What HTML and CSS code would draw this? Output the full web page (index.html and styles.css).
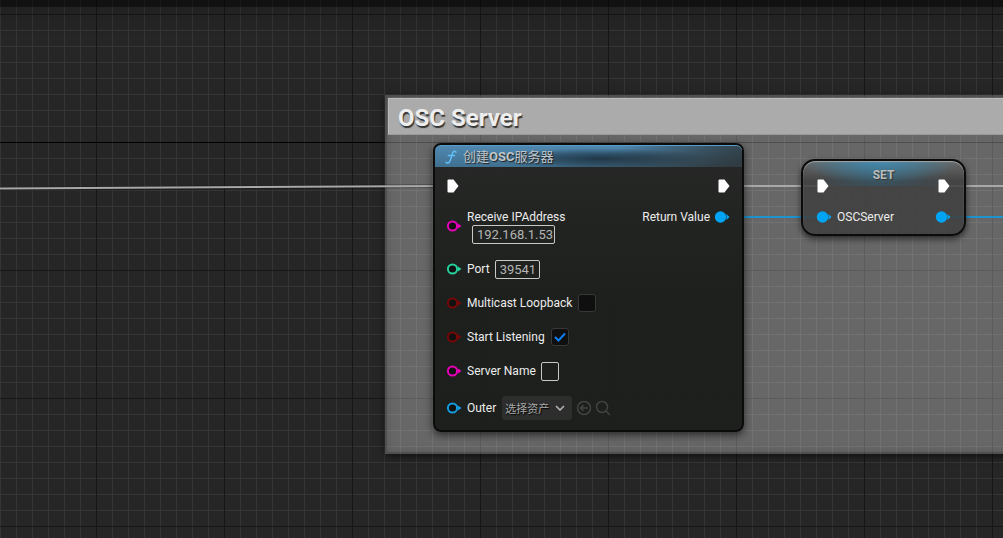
FILE: index.html
```html
<!DOCTYPE html>
<html lang="zh-CN">
<head>
<meta charset="utf-8">
<title>Blueprint Graph</title>
<link rel="stylesheet" href="styles.css">
</head>
<body>
<svg class="defs" width="0" height="0" aria-hidden="true">
  <symbol id="exec" viewBox="0 0 12 14"><path d="M0.5 1.5Q.5.5 1.5.5H6.500L11.500 7L6.500 13.500H1.500Q.5 13.500.5 12.500Z" fill="#fff"/></symbol>
  <symbol id="ring" viewBox="0 0 16 12"><circle cx="6.500" cy="6" r="4.600" fill="#111" stroke="currentColor" stroke-width="2"/><path d="M12 3.500L15.500 6L12 8.500Z" fill="currentColor"/></symbol>
  <symbol id="dot" viewBox="0 0 16 12"><circle cx="6.500" cy="6" r="5.700" fill="currentColor"/><path d="M12.500 3L15.500 6L12.500 9Z" fill="currentColor"/></symbol>
</svg>
<main class="graph">
  <section class="comment"><h1 class="comment-title">OSC Server</h1></section>

  <svg class="wires" aria-hidden="true">
    <path d="M0 189C150 189 300 186 440 186" stroke="#000" stroke-opacity=".25" stroke-width="4"/>
    <path d="M0 188.500C150 188.500 300 186 440 186M735 186H818M950 186H4000" stroke="#a8a8a8" stroke-width="2"/>
    <path d="M730 217H820M948 217H4000" stroke="#1f93cc" stroke-width="2"/>
  </svg>

  <article class="node create">
    <header class="node-head">
      <svg class="fn" viewBox="0 0 12 14" aria-hidden="true"><path d="M11 2.200C10 .6 8.300.9 7.600 3L5.200 10.500C4.500 12.800 2.800 13.700 1 12.300M3.300 5.500H9.500" fill="none" stroke="#62bdf5" stroke-width="1.500" stroke-linecap="round"/></svg>
      <h2 class="node-title">创建<b>OSC</b>服务器</h2>
    </header>
    <div class="exec-row"><svg class="exec"><use href="#exec"/></svg><svg class="exec"><use href="#exec"/></svg></div>
    <div class="pins">
      <div class="inputs">
        <div class="pin tall">
          <svg class="knob magenta"><use href="#ring"/></svg>
          <div class="stack"><label for="ip">Receive IPAddress</label><input class="field ip" id="ip" value="192.168.1.53"></div>
        </div>
        <div class="pin"><svg class="knob green"><use href="#ring"/></svg><label for="port">Port</label><input class="field port" id="port" value="39541"></div>
        <div class="pin"><svg class="knob red"><use href="#ring"/></svg><label for="loop">Multicast Loopback</label><input class="check" type="checkbox" id="loop"></div>
        <div class="pin"><svg class="knob red"><use href="#ring"/></svg><label for="listen">Start Listening</label>
          <span class="check-wrap"><input class="check" type="checkbox" id="listen" checked><svg class="tick" viewBox="0 0 12 10" aria-hidden="true"><path d="M1 5L4.500 8.500L11 1.500" fill="none" stroke="#0d7df0" stroke-width="2"/></svg></span></div>
        <div class="pin"><svg class="knob magenta"><use href="#ring"/></svg><label for="name">Server Name</label><input class="field name" id="name"></div>
        <div class="pin outer"><svg class="knob blue"><use href="#ring"/></svg><label for="outer">Outer</label>
          <span class="select-wrap"><select class="asset" id="outer"><option>选择资产</option></select><svg class="chevron" viewBox="0 0 10 6" aria-hidden="true"><path d="M1 1L5 5L9 1" fill="none" stroke="#b8b8b8" stroke-width="1.500"/></svg></span>
          <span class="tools">
            <button class="tool" aria-label="Use selected"><svg viewBox="0 0 16 16"><circle cx="8" cy="8" r="6.500"/><path d="M12 8H4.500M7.500 5L4.500 8L7.500 11"/></svg></button>
            <button class="tool" aria-label="Browse"><svg viewBox="0 0 16 16"><circle cx="7" cy="7" r="5.500"/><path d="M11 11L15 15"/></svg></button>
          </span>
        </div>
      </div>
      <div class="outputs"><span>Return Value</span><svg class="knob sky"><use href="#dot"/></svg></div>
    </div>
  </article>

  <article class="node set">
    <h2 class="set-title">SET</h2>
    <div class="set-exec"><svg class="exec"><use href="#exec"/></svg><svg class="exec"><use href="#exec"/></svg></div>
    <div class="set-data"><svg class="knob sky"><use href="#dot"/></svg><span>OSCServer</span><svg class="knob sky last"><use href="#dot"/></svg></div>
  </article>
</main>
</body>
</html>
```
FILE: styles.css
```css
* { box-sizing: border-box; }
body {
  margin: 0;
  background: #262626;
  color: #ececec;
  font: 12px/16px Roboto, "Noto Sans CJK SC", sans-serif;
}
h1, h2 { margin: 0; }
svg { display: block; flex: none; }
.defs { position: absolute; }

/* Canvas: 16px minor cells, 128px major cells */
.graph {
  position: relative;
  min-height: 100vh;
  overflow: hidden;
  background:
    linear-gradient(rgba(0, 0, 0, .55) 7px, rgba(0, 0, 0, .12) 7px, transparent 40px),
    linear-gradient(#000, #000) 0 142px / 100% 1px no-repeat,
    linear-gradient(#161616 1px, transparent 1px) 0 14px / 128px 128px,
    linear-gradient(90deg, #161616 1px, transparent 1px) 96px 0 / 128px 128px,
    linear-gradient(#353535 1px, transparent 1px) 0 14px / 16px 16px,
    linear-gradient(90deg, #353535 1px, transparent 1px) 0 0 / 16px 16px,
    #262626;
}

.comment {
  position: absolute;
  left: 385px;
  right: -8px;
  top: 95px;
  height: 359px;
  padding: 3px;
  background: rgba(255, 255, 255, .3);
  box-shadow: 0 2px 8px rgba(0, 0, 0, .6), inset 0 0 0 2px rgba(60, 60, 60, .4), inset 0 0 12px rgba(0, 0, 0, .2);
}
.comment-title {
  height: 37px;
  padding: 0 9px;
  background: #ababab;
  border: 1px solid #bcbcbc;
  border-bottom-color: #999;
  color: #eee;
  font-size: 24px;
  line-height: 38px;
  text-shadow: 1px 2px 1px #333;
}
.wires {
  position: absolute;
  inset: 0;
  width: 100%;
  height: 100%;
  fill: none;
}

.node {
  position: absolute;
  border: 2px solid #0b0b0b;
  box-shadow: 0 3px 8px rgba(0, 0, 0, .6);
}
.create {
  left: 433px;
  top: 143px;
  width: 311px;
  border-radius: 8px;
  background: linear-gradient(rgba(37, 38, 37, .97), rgba(27, 30, 27, .98) 55%);
}
.node-head {
  display: flex;
  align-items: center;
  gap: 6px;
  height: 22px;
  padding: 0 10px;
  border-top: 1px solid #5a9cc8;
  border-radius: 6px 6px 0 0;
  background:
    linear-gradient(165deg, transparent 50%, rgba(45, 51, 53, .7) 95%),
    radial-gradient(ellipse 36% 50% at 54% 60%, rgba(25, 44, 58, .85), rgba(25, 44, 58, .5) 50%, transparent),
    linear-gradient(90deg, transparent 60%, rgba(45, 55, 60, .6)),
    linear-gradient(#4f88b0, #40708f);
}
.fn { width: 12px; height: 14px; }
.node-title {
  color: #bfc5c9;
  font-size: 13px;
  line-height: 18px;
  font-weight: 400;
  text-shadow: 1px 1px 1px #222;
}
.exec { width: 12px; height: 14px; }
.exec-row {
  display: flex;
  align-items: center;
  justify-content: space-between;
  height: 38px;
  padding: 0 12px;
}
.pins { display: flex; justify-content: space-between; padding-bottom: 2px; }
.pin {
  display: flex;
  align-items: center;
  height: 34px;
  padding-left: 11px;
}
.pin label { margin-left: 5px; }
.knob { width: 16px; height: 12px; }
.tall { height: 47px; padding-bottom: 5px; }
.stack { display: flex; flex-direction: column; }
.field {
  height: 19px;
  margin: 0 0 0 5px;
  padding: 0 4px;
  border: 1px solid #c8c8c8;
  border-radius: 2px;
  background: transparent;
  color: #b4b4b4;
  font: 13px/17px Roboto, sans-serif;
}
.stack .ip { width: 83px; margin-left: 10px; padding: 0 0 0 4px; }
.port { width: 45px; }
.name { width: 18px; }
.check {
  display: block;
  appearance: none;
  width: 18px;
  height: 18px;
  margin: 0 0 0 6px;
  border: 1px solid #383838;
  border-radius: 3px;
  background: #0f0f0f;
}
.check-wrap, .select-wrap { position: relative; }
.tick {
  position: absolute;
  right: 3px;
  top: 4px;
  width: 12px;
  height: 10px;
  pointer-events: none;
}
.outer { height: 40px; }
.select-wrap { margin-left: 6px; }
.asset {
  display: block;
  appearance: none;
  width: 70px;
  height: 24px;
  padding: 0 3px;
  border: 0;
  border-radius: 3px;
  background: #2c2d2c;
  color: #aaa;
  font: 11px/24px "Noto Sans CJK SC", sans-serif;
  text-shadow: 1px 1px 1px #000;
}
.chevron {
  position: absolute;
  right: 7px;
  top: 9px;
  width: 10px;
  height: 6px;
  pointer-events: none;
}
.tools { display: flex; gap: 3px; margin-left: 4px; }
.tool { width: 16px; height: 16px; padding: 0; border: 0; background: none; }
.tool svg { width: 16px; height: 16px; fill: none; stroke: #424342; stroke-width: 1.5px; }
.outputs { display: flex; align-items: center; gap: 4px; height: 24px; padding-right: 12px; }
.magenta { color: #e600b8; }
.green { color: #25d09a; }
.red { color: #780808; }
.blue { color: #149be0; }
.sky { color: #00a4f4; }

.set {
  left: 801px;
  top: 159px;
  width: 165px;
  height: 77px;
  padding: 5px 13px;
  border-radius: 14px;
  background:
    radial-gradient(ellipse 50% 22px at 48% 0, rgba(65, 155, 200, .75), transparent),
    linear-gradient(90deg, transparent 8%, rgba(50, 90, 110, .6) 45%, transparent 90%) 0 0 / 100% 25px no-repeat,
    linear-gradient(rgba(105, 105, 105, .85), rgba(62, 62, 62, .85) 20px, rgba(62, 62, 62, .85));
  box-shadow: inset 0 1px 1px #a5a5a5, 0 3px 6px rgba(0, 0, 0, .6);
}
.set-title {
  color: #b9bcbd;
  font-size: 12px;
  line-height: 18px;
  text-align: center;
  text-shadow: 1px 1px 1px #333;
}
.set-exec { display: flex; justify-content: space-between; height: 14px; margin-top: -5px; padding: 0 1px; }
.set-data { display: flex; align-items: center; gap: 5px; margin-top: 16px; }
.last { margin-left: auto; }
```
